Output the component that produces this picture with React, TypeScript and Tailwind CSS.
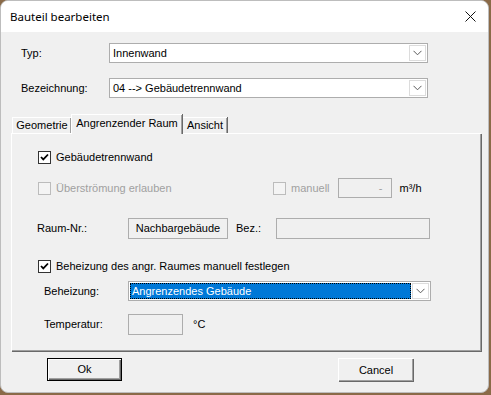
import React from "react";

const sans = { fontFamily: '"Liberation Sans", Arial, sans-serif' };

function Chevron() {
  return (
    <svg width="9" height="6" viewBox="0 0 9 6" className="block">
      <path d="M0.5 0.8 L4.5 4.8 L8.5 0.8" stroke="#5a5a5a" strokeWidth="1" fill="none" />
    </svg>
  );
}

function Combo({ value, width, selected }: { value: string; width: string; selected?: boolean }) {
  return (
    <div className={`flex h-[20px] ${width} items-stretch border border-[#adadad] bg-white p-[1px]`}>
      <div
        className={`flex flex-1 items-center pl-[1px] ${
          selected ? "bg-[#0078d7] text-white border border-dotted border-black" : "text-black pl-[2px]"
        }`}
      >
        {value}
      </div>
      <div className="ml-[1px] flex w-[17px] items-center justify-center border border-[#dcdcdc] bg-white">
        <Chevron />
      </div>
    </div>
  );
}

function Check({ checked, disabled }: { checked?: boolean; disabled?: boolean }) {
  return (
    <div
      className={`flex h-[13px] w-[13px] shrink-0 items-center justify-center border ${
        disabled ? "border-[#bcbcbc] bg-[#f4f4f4]" : "border-[#333333] bg-white"
      }`}
    >
      {checked && (
        <svg width="9" height="9" viewBox="0 0 9 9" className="block">
          <path d="M1 4 L3.3 6.4 L8 1.5" stroke="#000" strokeWidth="1.8" fill="none" />
        </svg>
      )}
    </div>
  );
}

function Box({ width, children, height = "h-[21px]" }: { width: string; children?: React.ReactNode; height?: string }) {
  return (
    <div className={`flex ${height} ${width} items-center justify-center border border-[#adadad] bg-[#f0f0f0]`}>
      {children}
    </div>
  );
}

export default function App() {
  return (
    <div className="h-[395px] w-[491px] bg-[#8a6a48] text-[11px] leading-none" style={sans}>
      <div className="flex h-[393px] w-[489px] flex-col overflow-hidden rounded-[8px] border border-[#bdbdbd] bg-[#f0f0f0]">
        {/* title bar */}
        <div className="flex h-[31px] shrink-0 items-center justify-between bg-white pl-[9px] pr-[12px]">
          <span className="text-[11.5px] text-black" style={{ fontFamily: '"Noto Sans", "Open Sans", sans-serif' }}>
            Bauteil bearbeiten
          </span>
          <svg width="11" height="11" viewBox="0 0 11 11" className="block">
            <path d="M0.5 0.5 L10.5 10.5 M10.5 0.5 L0.5 10.5" stroke="#111" strokeWidth="1" />
          </svg>
        </div>

        {/* body */}
        <div className="flex flex-1 flex-col pt-[11px]">
          <div className="flex items-center pl-[20px]">
            <span className="w-[88px]">Typ:</span>
            <Combo value="Innenwand" width="w-[319px]" />
          </div>
          <div className="mt-[15px] flex items-center pl-[20px]">
            <span className="w-[88px]">Bezeichnung:</span>
            <Combo value="04 --> Gebäudetrennwand" width="w-[319px]" />
          </div>

          {/* tabs */}
          <div className="mt-[16px] flex h-[19px] items-end pl-[11px]">
            <div className="flex h-[16px] w-[59px] items-center justify-center border-l border-t border-white shadow-[inset_-1px_0_0_#a0a0a0,1px_0_0_#696969]">
              Geometrie
            </div>
            <div className="relative z-10 -mb-[1px] flex h-[20px] w-[111px] items-start justify-center border-l border-t border-white bg-[#f0f0f0] pt-[3px] shadow-[inset_-1px_0_0_#a0a0a0,1px_0_0_#696969]">
              Angrenzender Raum
            </div>
            <div className="ml-[1px] flex h-[16px] w-[44px] items-center justify-center border-t border-white shadow-[inset_-1px_0_0_#a0a0a0,1px_0_0_#696969]">
              Ansicht
            </div>
          </div>

          {/* panel */}
          <div className="ml-[10px] flex h-[218px] w-[470px] flex-col border-l border-t border-white shadow-[inset_-1px_-1px_0_#a0a0a0,1px_1px_0_#696969]">
            <div className="mt-[17px] flex items-center pl-[26px]">
              <Check checked />
              <span className="ml-[5px]">Gebäudetrennwand</span>
            </div>

            <div className="mt-[14px] flex h-[20px] items-center pl-[26px]">
              <Check disabled />
              <span className="ml-[5px] w-[212px] text-[#a0a0a0]">Überströmung erlauben</span>
              <div className="ml-[5px] flex items-center">
                <Check disabled />
                <span className="ml-[5px] text-[#a0a0a0]">manuell</span>
                <div className="ml-[8px] flex h-[20px] w-[54px] items-center justify-end border border-[#adadad] pr-[8px] text-[#a0a0a0]">
                  -
                </div>
                <span className="ml-[8px]">m³/h</span>
              </div>
            </div>

            <div className="mt-[20px] flex items-center pl-[25px]">
              <span className="w-[91px]">Raum-Nr.:</span>
              <Box width="w-[100px]">Nachbargebäude</Box>
              <span className="ml-[8px] w-[40px]">Bez.:</span>
              <Box width="w-[154px]" />
            </div>

            <div className="mt-[21px] flex items-center pl-[26px]">
              <Check checked />
              <span className="ml-[5px]">Beheizung des angr. Raumes manuell festlegen</span>
            </div>

            <div className="mt-[8px] flex items-center pl-[32px]">
              <span className="w-[84px]">Beheizung:</span>
              <Combo value="Angrenzendes Gebäude" width="w-[303px]" selected />
            </div>

            <div className="mt-[13px] flex items-center pl-[32px]">
              <span className="w-[84px]">Temperatur:</span>
              <Box width="w-[55px]" />
              <span className="ml-[10px]">°C</span>
            </div>
          </div>

          {/* buttons */}
          <div className="mt-[7px] flex pl-[46px]">
            <div className="flex h-[23px] w-[75px] items-center justify-center border border-black shadow-[inset_1px_1px_0_#fff,inset_-1px_-1px_0_#696969,inset_-2px_-2px_0_#a0a0a0]">
              Ok
            </div>
            <div className="ml-[216px] flex h-[23px] w-[75px] items-center justify-center border-l border-t border-white shadow-[inset_-1px_-1px_0_#a0a0a0,1px_1px_0_#696969]">
              Cancel
            </div>
          </div>
        </div>
      </div>
    </div>
  );
}
